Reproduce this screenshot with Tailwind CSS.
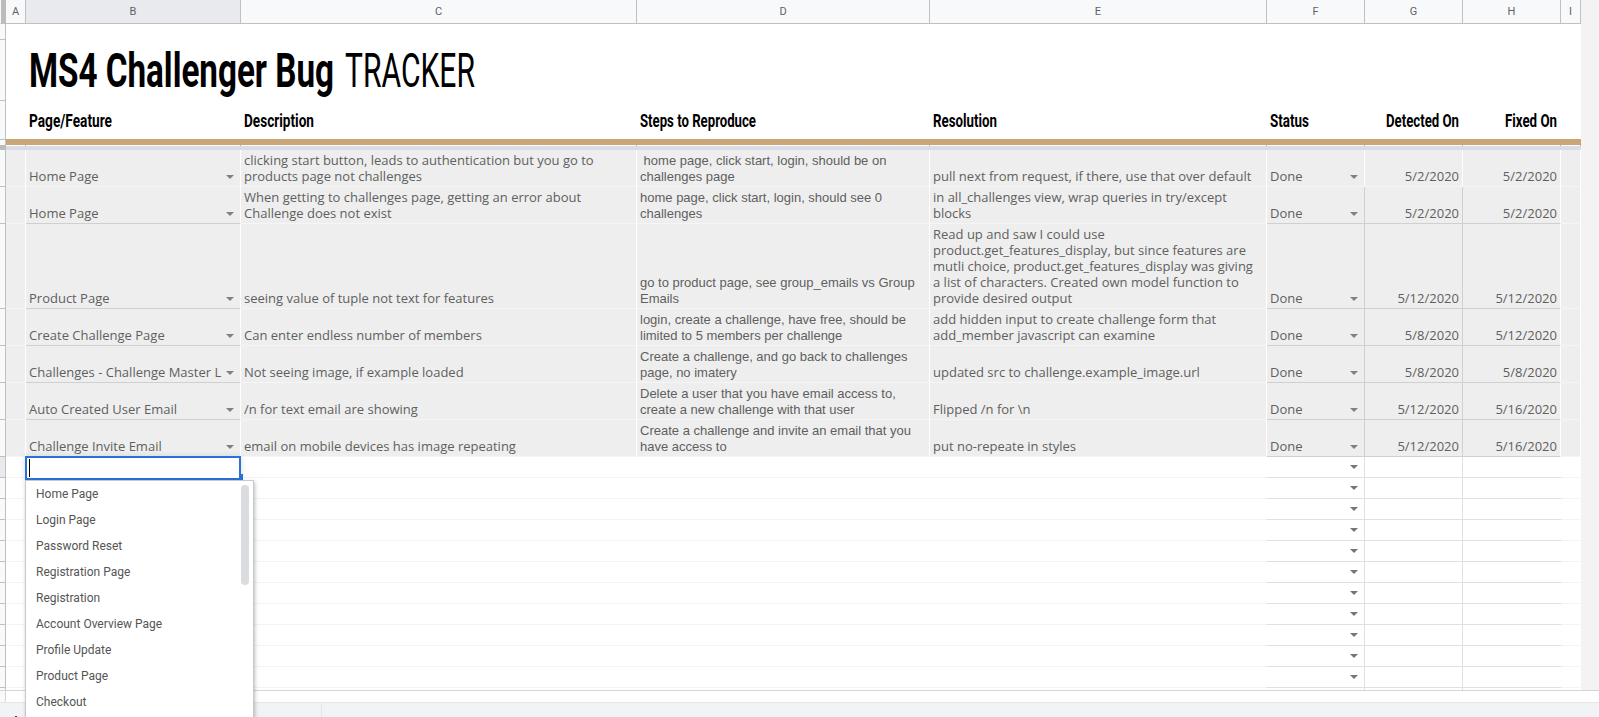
<!DOCTYPE html>
<html lang="en">
<head>
<meta charset="utf-8">
<title>MS4 Challenger Bug Tracker</title>
<script src="https://cdn.jsdelivr.net/npm/@tailwindcss/browser@4"></script>
</head>
<body class="relative h-[717px] w-[1599px] overflow-hidden bg-[#f3f3f3] font-['Open_Sans',sans-serif] text-[#5f5f5f]">

<!-- Column letters -->
<div class="flex h-6 font-['Roboto',sans-serif] text-[11px] leading-[23px] text-[#5f6368]">
  <div class="w-1.5 shrink-0 border-b border-l border-b-[#c0c0c0] border-l-[#f8f9fa] bg-[#bcbcbc]"></div>
  <div id="letters" class="flex text-center"></div>
</div>

<!-- Frozen rows -->
<div class="flex h-[126px]">
  <div class="flex w-1.5 shrink-0 flex-col border-r border-[#c0c0c0] bg-[#f8f9fa]">
    <div class="h-4 border-b border-[#c0c0c0]"></div>
    <div class="h-[61px] border-b border-[#c0c0c0]"></div>
    <div class="h-[39px] border-b border-[#c0c0c0]"></div>
    <div class="h-[5px]"></div>
    <div class="-mr-px h-[5px] bg-[#bcbcbc]"></div>
  </div>
  <div class="flex w-[1575px] flex-col bg-white">
    <svg class="block h-[77px] w-full font-['Roboto',sans-serif]" fill="#000">
      <text x="23" y="63" font-size="49" font-weight="700" textLength="305" lengthAdjust="spacingAndGlyphs">MS4 Challenger Bug</text>
      <text x="339" y="63" font-size="49" font-weight="400" textLength="130" lengthAdjust="spacingAndGlyphs">TRACKER</text>
    </svg>
    <svg class="block h-[38px] w-full font-['Roboto',sans-serif]" fill="#000" font-size="18.5" font-weight="700">
      <text x="23" y="26" textLength="83" lengthAdjust="spacingAndGlyphs">Page/Feature</text>
      <text x="238" y="26" textLength="70" lengthAdjust="spacingAndGlyphs">Description</text>
      <text x="634" y="26" textLength="116" lengthAdjust="spacingAndGlyphs">Steps to Reproduce</text>
      <text x="927" y="26" textLength="64" lengthAdjust="spacingAndGlyphs">Resolution</text>
      <text x="1264" y="26" textLength="39" lengthAdjust="spacingAndGlyphs">Status</text>
      <text x="1380" y="26" textLength="73" lengthAdjust="spacingAndGlyphs">Detected On</text>
      <text x="1499" y="26" textLength="52" lengthAdjust="spacingAndGlyphs">Fixed On</text>
    </svg>
    <div class="h-1.5 bg-[#c9a677]"></div>
    <div id="ticks" class="flex h-px"></div>
    <div class="h-1 bg-[#dadce8]"></div>
  </div>
</div>

<!-- Rows -->
<div id="rows" class="h-[540px] w-[1581px] overflow-hidden bg-white text-[13px] leading-4"></div>

<!-- Bottom edge and tab bar -->
<div class="flex h-3 border-t border-[#d5d5d5] bg-white"><div class="w-1.5 border-r border-[#d5d5d5] bg-[#f8f9fa]"></div></div>
<div class="h-[15px] border-t border-[#e4e6e9] bg-[#f1f3f4]">
  <div class="relative h-full w-[322px] border-r border-[#e4e6e9]">
    <svg class="absolute left-[9px] top-[13px] h-[14px] w-[14px]" stroke="#444" stroke-width="2"><path d="M7 0v14M0 7h14"/></svg>
  </div>
</div>

<!-- Active cell editor -->
<div class="absolute left-[25px] top-[456px] h-6 w-[216px] border-2 border-[#2b71db] bg-white shadow-[0_1px_6px_rgba(60,64,67,0.2)]">
  <div class="ml-[2px] mt-px h-[18px] w-px bg-black"></div>
</div>
<div class="absolute left-[240px] top-[474px] h-[6px] w-[3px] bg-[#2b71db]"></div>

<!-- Suggestion list -->
<div class="absolute left-[25px] top-[480px] h-[260px] w-[229px] border border-[#c8c8c8] bg-white font-['Roboto',sans-serif] text-xs leading-[26px] shadow-[1px_2px_4px_rgba(0,0,0,0.25)]">
  <ul id="options" class="pl-2.5 text-[#555]">
    <li>Home Page</li><li>Login Page</li><li>Password Reset</li><li>Registration Page</li><li>Registration</li><li>Account Overview Page</li><li>Profile Update</li><li>Product Page</li><li>Checkout</li>
  </ul>
  <div class="absolute right-1 top-1 h-[100px] w-2 rounded-full bg-[#dadce0]"></div>
</div>

<script>
const W = ['w-[20px]','w-[215px]','w-[396px]','w-[293px]','w-[337px]','w-[98px]','w-[98px]','w-[98px]','w-[20px]'];
document.getElementById('letters').innerHTML = [...'ABCDEFGHI'].map((l, i) =>
  `<div class="${W[i]} shrink-0 border-r border-b border-[#c0c0c0] ${i === 1 ? 'bg-[#e8eaed]' : 'bg-[#f8f9fa]'}">${l}</div>`).join('');
document.getElementById('ticks').innerHTML = W.map(w => `<div class="${w} shrink-0 border-r border-[#c9a677]"></div>`).join('');

const data = [
  ['h-[37px]','Home Page','clicking start button, leads to authentication but you go to<br>products page not challenges','&nbsp;home page, click start, login, should be on<br>challenges page','pull next from request, if there, use that over default','5/2/2020','5/2/2020'],
  ['h-[37px]','Home Page','When getting to challenges page, getting an error about<br>Challenge does not exist','home page, click start, login, should see 0<br>challenges','in all_challenges view, wrap queries in try/except<br>blocks','5/2/2020','5/2/2020'],
  ['h-[85px]','Product Page','seeing value of tuple not text for features','go to product page, see group_emails vs Group<br>Emails','Read up and saw I could use<br>product.get_features_display, but since features are<br>mutli choice, product.get_features_display was giving<br>a list of characters. Created own model function to<br>provide desired output','5/12/2020','5/12/2020'],
  ['h-[37px]','Create Challenge Page','Can enter endless number of members','login, create a challenge, have free, should be<br>limited to 5 members per challenge','add hidden input to create challenge form that<br>add_member javascript can examine','5/8/2020','5/12/2020'],
  ['h-[37px]','Challenges - Challenge Master L','Not seeing image, if example loaded','Create a challenge, and go back to challenges<br>page, no imatery','updated src to challenge.example_image.url','5/8/2020','5/8/2020'],
  ['h-[37px]','Auto Created User Email','/n for text email are showing','Delete a user that you have email access to,<br>create a new challenge with that user','Flipped /n for \\n','5/12/2020','5/16/2020'],
  ['h-[37px]','Challenge Invite Email','email on mobile devices has image repeating','Create a challenge and invite an email that you<br>have access to','put no-repeate in styles','5/12/2020','5/16/2020'],
];
const arrow = '<svg class="mb-[5px] mr-[6px] h-1 w-2 shrink-0" viewBox="0 0 8 4"><path d="M0 0h8L4 4z" fill="#808080"/></svg>';
let html = '';
data.forEach((r, n) => {
  const cells = ['', r[1], r[2], r[3], r[4], 'Done', r[5], r[6], ''];
  html += `<div class="flex ${r[0]}"><div class="w-1.5 shrink-0 border-r border-b border-[#c0c0c0] bg-[#f8f9fa]"></div>` +
    cells.map((c, i) => {
      const right = n && (i === 5 || i === 6) ? 'border-r-[#d0d0d0]' : 'border-r-white';
      const bottom = n && (i === 1 || (i > 4 && i < 8)) ? 'border-b-[#d0d0d0]' : 'border-b-[#f5f5f5]';
      return `<div class="${W[i]} flex shrink-0 items-end border-r border-b ${right} ${bottom} bg-[#eee] pl-[3px] whitespace-nowrap ${i === 3 ? "pb-px font-['Liberation_Sans',sans-serif]" : 'pb-[2px]'} ${i === 6 || i === 7 ? 'justify-end pr-[3px]' : 'justify-between'}"><span>${c}</span>${i === 1 || i === 5 ? arrow : ''}</div>`;
    }).join('') + '</div>';
});
for (let n = 0; n < 12; n++) {
  html += `<div class="flex h-[21px]"><div class="w-1.5 shrink-0 border-r border-b border-[#c0c0c0] ${n ? 'bg-[#f8f9fa]' : 'bg-[#e8eaed]'}"></div>` +
    W.map((w, i) => {
      const right = i === 5 || i === 6 ? 'border-r border-r-[#e0e0e0]' : '';
      const bottom = i > 4 && i < 8 ? 'border-b-[#e0e0e0]' : 'border-b-[#f3f3f3]';
      return `<div class="${w} flex shrink-0 items-end justify-end border-b ${right} ${bottom}">${i === 5 && n < 11 ? '<svg class="mb-[8px] mr-[6px] h-1 w-2" viewBox="0 0 8 4"><path d="M0 0h8L4 4z" fill="#757575"/></svg>' : ''}</div>`;
    }).join('') + '</div>';
}
document.getElementById('rows').innerHTML = html;
</script>
</body>
</html>
